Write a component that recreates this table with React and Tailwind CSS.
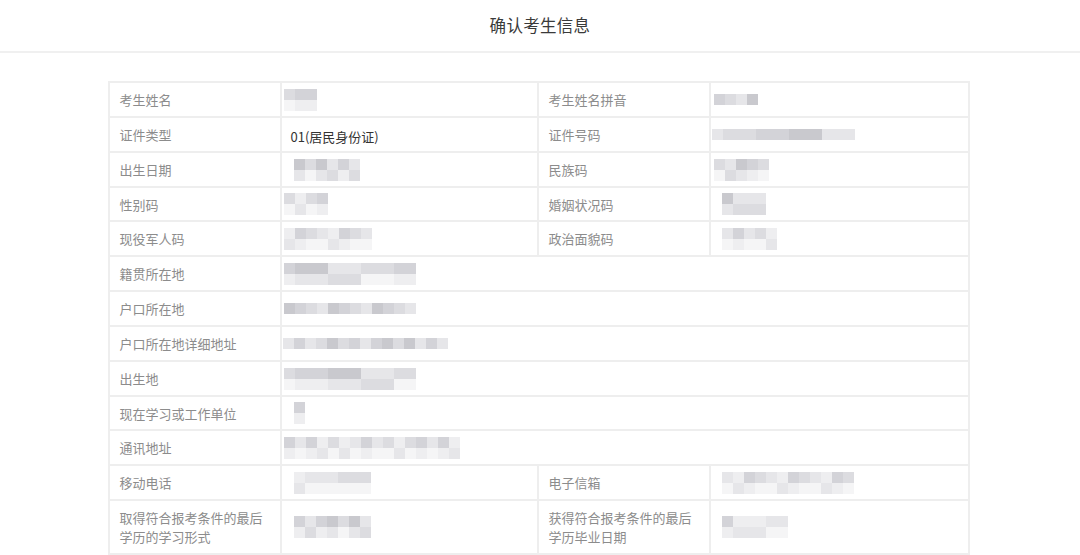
const shades = [
  "bg-[#c9c9ce]",
  "bg-[#d3d3d8]",
  "bg-[#dcdce0]",
  "bg-[#e6e6e9]",
  "bg-[#eeeef0]",
  "bg-[#f5f5f6]",
];

// pixelated placeholder for the masked personal data
function Mosaic({ cols, rows = 2, seed = 1, offset = 0, light = false }) {
  const grid = [];
  for (let r = 0; r < rows; r++) {
    const line = [];
    for (let c = 0; c < cols; c++) {
      const n = (seed * 7 + r * 13 + c * 5 + ((c * seed) % 3)) % 4;
      const idx = Math.min(5, n + r * 2 + (light ? 1 : 0));
      line.push(<div key={c} className={"w-[11px] h-[11px] " + shades[idx]} />);
    }
    grid.push(
      <div key={r} className="flex">
        {line}
      </div>
    );
  }
  return (
    <div className="flex flex-col" style={{ marginLeft: offset }}>
      {grid}
    </div>
  );
}

const Label = ({ children, className = "" }) => (
  <td className={"pl-[10px] text-[13px] leading-[19px] text-[#8c8c8c] border-2 border-[#eeeeee] " + className}>
    {children}
  </td>
);

const Value = ({ children, colSpan, className = "" }) => (
  <td colSpan={colSpan} className={"pl-[1px] border-2 border-[#eeeeee] " + className}>
    {children}
  </td>
);

export default function App() {
  return (
    <div className="w-full h-screen bg-white overflow-hidden font-['Noto_Sans_CJK_SC','Noto_Sans',sans-serif]">
      <div className="h-[53px] border-b-2 border-[#f0f0f0] flex items-center justify-center">
        <h1 className="text-[16.5px] text-[#3a3a3a] tracking-[0.3px]">确认考生信息</h1>
      </div>

      <div className="pt-[28px] pr-[3px] flex justify-center">
        <table className="w-[860px] border-collapse table-fixed">
          <colgroup>
            <col className="w-[172px]" />
            <col className="w-[257px]" />
            <col className="w-[172px]" />
            <col className="w-[259px]" />
          </colgroup>
          <tbody>
            <tr className="h-[35px]">
              <Label>考生姓名</Label>
              <Value><Mosaic cols={3} seed={2} offset={1} /></Value>
              <Label>考生姓名拼音</Label>
              <Value><Mosaic cols={4} rows={1} seed={3} offset={2} /></Value>
            </tr>
            <tr className="h-[35px]">
              <Label>证件类型</Label>
              <Value><span className="pl-[8px] text-[13px] text-[#333333]">01(居民身份证)</span></Value>
              <Label>证件号码</Label>
              <Value><Mosaic cols={13} rows={1} seed={5} offset={0} /></Value>
            </tr>
            <tr className="h-[35px]">
              <Label>出生日期</Label>
              <Value><Mosaic cols={6} seed={4} offset={11} /></Value>
              <Label>民族码</Label>
              <Value><Mosaic cols={5} seed={6} offset={2} /></Value>
            </tr>
            <tr className="h-[34px]">
              <Label>性别码</Label>
              <Value><Mosaic cols={4} seed={7} offset={1} light /></Value>
              <Label>婚姻状况码</Label>
              <Value><Mosaic cols={4} seed={8} offset={10} /></Value>
            </tr>
            <tr className="h-[35px]">
              <Label>现役军人码</Label>
              <Value><Mosaic cols={8} seed={9} offset={1} light /></Value>
              <Label>政治面貌码</Label>
              <Value><Mosaic cols={5} seed={10} offset={10} light /></Value>
            </tr>
            <tr className="h-[35px]">
              <Label>籍贯所在地</Label>
              <Value colSpan={3}><Mosaic cols={12} seed={11} offset={1} /></Value>
            </tr>
            <tr className="h-[35px]">
              <Label>户口所在地</Label>
              <Value colSpan={3}><Mosaic cols={12} rows={1} seed={12} offset={1} /></Value>
            </tr>
            <tr className="h-[35px]">
              <Label>户口所在地详细地址</Label>
              <Value colSpan={3}><Mosaic cols={15} rows={1} seed={13} offset={0} /></Value>
            </tr>
            <tr className="h-[35px]">
              <Label>出生地</Label>
              <Value colSpan={3}><Mosaic cols={12} seed={14} offset={1} /></Value>
            </tr>
            <tr className="h-[34px]">
              <Label>现在学习或工作单位</Label>
              <Value colSpan={3}><Mosaic cols={1} seed={15} offset={11} /></Value>
            </tr>
            <tr className="h-[35px]">
              <Label>通讯地址</Label>
              <Value colSpan={3}><Mosaic cols={16} seed={16} offset={1} light /></Value>
            </tr>
            <tr className="h-[35px]">
              <Label>移动电话</Label>
              <Value><Mosaic cols={7} seed={17} offset={11} light /></Value>
              <Label>电子信箱</Label>
              <Value><Mosaic cols={12} seed={18} offset={10} light /></Value>
            </tr>
            <tr className="h-[54px]">
              <Label>取得符合报考条件的最后<br />学历的学习形式</Label>
              <Value><Mosaic cols={7} seed={19} offset={11} /></Value>
              <Label>获得符合报考条件的最后<br />学历毕业日期</Label>
              <Value><Mosaic cols={6} seed={20} offset={10} light /></Value>
            </tr>
          </tbody>
        </table>
      </div>
    </div>
  );
}
